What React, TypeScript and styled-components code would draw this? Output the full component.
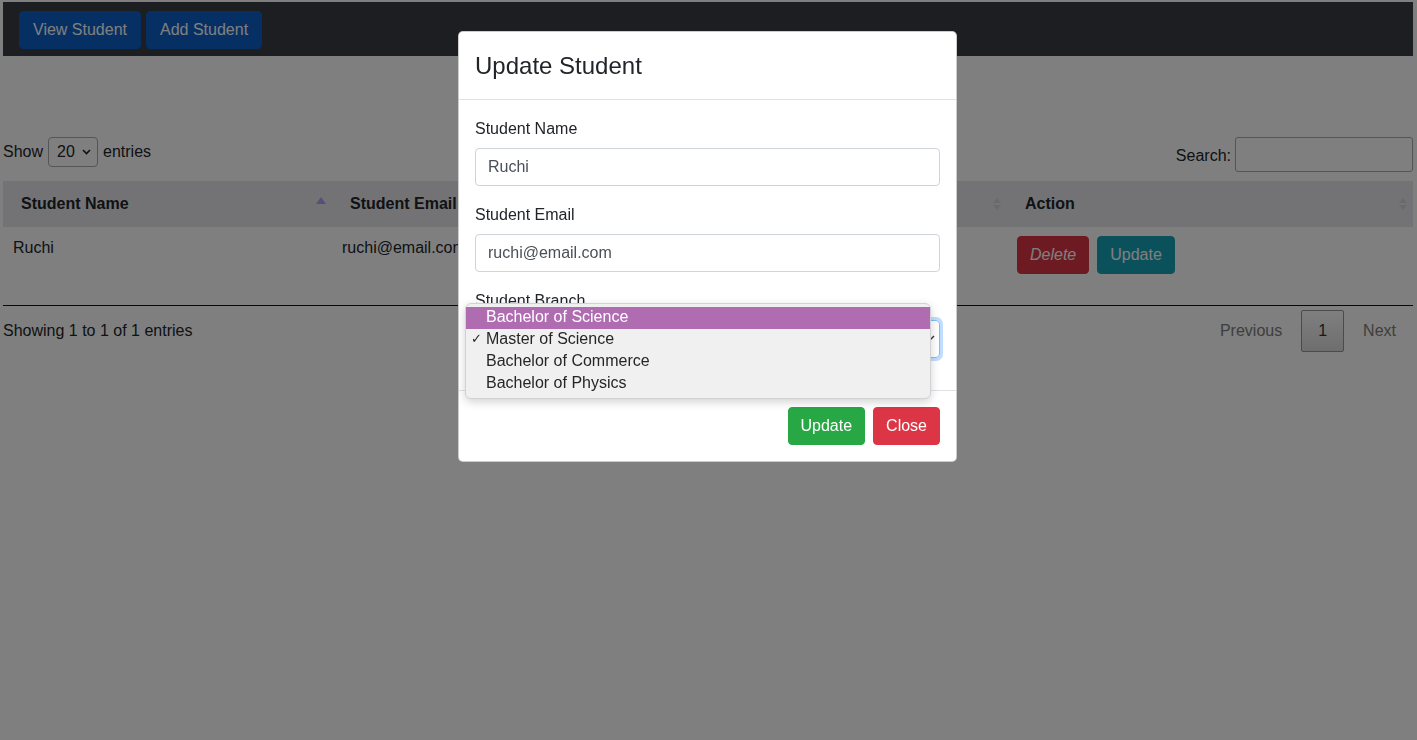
import React from "react";
import styled, { createGlobalStyle, css } from "styled-components";

const Global = createGlobalStyle`
  html, body { margin: 0; padding: 0; background: #fff; }
  body {
    font-family: "Liberation Sans", Arial, sans-serif;
    font-size: 16px;
    line-height: 1.5;
    color: #212529;
    overflow: hidden;
  }
  * { box-sizing: border-box; }
`;

const Page = styled.div`
  padding: 2px 4px 0 3px;
  height: 740px;
`;

const Navbar = styled.nav`
  display: flex;
  align-items: center;
  gap: 5px;
  height: 54px;
  padding: 9px 16px 7px;
  background: #383c42;
`;

const NavButton = styled.button`
  height: 38px;
  padding: 0 13px;
  border: 1px solid #0c5ec9;
  border-radius: 4px;
  background: #0c5ec9;
  color: #fff;
  font: inherit;
  font-size: 16px;
`;

const TableTop = styled.div`
  display: flex;
  justify-content: space-between;
  align-items: flex-start;
  margin-top: 81px;
`;

const LengthControl = styled.label`
  display: flex;
  align-items: center;
  gap: 4px;
  height: 30px;
`;

const SmallSelect = styled.div`
  display: flex;
  align-items: center;
  justify-content: space-between;
  width: 50px;
  height: 30px;
  padding: 0 6px 0 8px;
  border: 1px solid #aaa;
  border-radius: 4px;
  margin: 0 1px;
`;

const SearchControl = styled.label`
  display: flex;
  align-items: center;
  gap: 4px;
  height: 35px;
  padding-top: 2px;
`;

const SearchInput = styled.div`
  width: 178px;
  height: 35px;
  border: 1px solid #aaa;
  border-radius: 3px;
  margin-top: -2px;
`;

const Table = styled.table`
  width: 100%;
  border-collapse: collapse;
  margin-top: 9px;
  border-bottom: 1px solid #111;
  table-layout: fixed;
`;

const Th = styled.th<{ $w?: number }>`
  position: relative;
  text-align: left;
  font-weight: bold;
  padding: 11px 18px;
  height: 46px;
  background: #e6e7ea;
  ${(p) => p.$w && css`width: ${p.$w}px;`}
`;

const SortIcon = styled.span<{ $active?: boolean }>`
  position: absolute;
  right: 6px;
  top: 50%;
  width: 8px;
  height: 14px;
  transform: translateY(-50%);
  display: flex;
  flex-direction: column;
  align-items: center;
  justify-content: center;
  gap: 2px;
  &::before, &::after {
    content: "";
    width: 0;
    height: 0;
    border-left: 4px solid transparent;
    border-right: 4px solid transparent;
  }
  &::before { border-bottom: 5px solid #d3d4d8; }
  &::after { border-top: 5px solid #d3d4d8; }
  ${(p) =>
    p.$active &&
    css`
      top: 16px;
      right: 6px;
      width: 10px;
      height: 7px;
      transform: none;
      &::before {
        border-left-width: 5px;
        border-right-width: 5px;
        border-bottom: 7px solid #a4a4f0;
      }
      &::after { display: none; }
    `}
`;

const Td = styled.td`
  padding: 9px 10px 31px;
  vertical-align: top;
  white-space: nowrap;
  overflow: hidden;
`;

const Btn = styled.button<{ $variant: "danger" | "info" | "success"; $italic?: boolean }>`
  height: 38px;
  padding: 0 12px;
  border-radius: 4px;
  font: inherit;
  font-size: 16px;
  color: #fff;
  ${(p) => p.$italic && css`font-style: italic;`}
  ${(p) =>
    p.$variant === "danger"
      ? css`background: #dc3545; border: 1px solid #dc3545;`
      : p.$variant === "info"
      ? css`background: #17a2b8; border: 1px solid #17a2b8;`
      : css`background: #28a745; border: 1px solid #28a745;`}
`;

const ActionGroup = styled.div`
  display: flex;
  gap: 8px;
`;

const TableBottom = styled.div`
  display: flex;
  justify-content: space-between;
  align-items: flex-start;
`;

const Info = styled.div`
  padding-top: 13px;
`;

const Pagination = styled.div`
  display: flex;
  padding-top: 4px;
`;

const PageButton = styled.span<{ $current?: boolean }>`
  margin-left: 2px;
  padding: 8px 16px;
  border: 1px solid transparent;
  border-radius: 2px;
  color: #7c7c7c;
  ${(p) =>
    p.$current &&
    css`
      color: #333;
      border-color: #979797;
      background: linear-gradient(to bottom, #fff 0%, #dcdcdc 100%);
    `}
`;

const Backdrop = styled.div`
  position: fixed;
  inset: 0;
  background: rgba(0, 0, 0, 0.5);
  z-index: 10;
`;

const Modal = styled.div`
  position: fixed;
  top: 31px;
  left: calc(50% - 250.5px);
  width: 499px;
  background: #fff;
  border: 1px solid rgba(0, 0, 0, 0.2);
  border-radius: 5px;
  z-index: 20;
`;

const ModalHeader = styled.div`
  padding: 16px 16px 15px;
  border-bottom: 1px solid #dee2e6;
`;

const ModalTitle = styled.h4`
  margin: 0;
  font-size: 24px;
  font-weight: 500;
  line-height: 36px;
`;

const ModalBody = styled.div`
  padding: 16px;
`;

const FormGroup = styled.div`
  position: relative;
  margin-bottom: 16px;
`;

const Label = styled.label`
  display: block;
  margin-bottom: 8px;
  padding-top: 1px;
  line-height: 23px;
`;

const Input = styled.div<{ $focus?: boolean }>`
  position: relative;
  height: 38px;
  padding: 6px 12px;
  border: 1px solid #ced4da;
  border-radius: 4px;
  color: #495057;
  ${(p) =>
    p.$focus &&
    css`
      border-color: #80bdff;
      box-shadow: 0 0 0 3px rgba(0, 123, 255, 0.25);
    `}
`;

const Chevron = styled.svg`
  position: absolute;
  right: 4px;
  top: 14px;
`;

const ModalFooter = styled.div`
  display: flex;
  justify-content: flex-end;
  gap: 8px;
  padding: 16px;
  border-top: 1px solid #dee2e6;
`;

const Dropdown = styled.ul`
  position: absolute;
  top: 15px;
  left: -10px;
  width: 466px;
  margin: 0;
  padding: 3px 0;
  list-style: none;
  background: #f0f0f1;
  border: 1px solid #d2d2d4;
  border-radius: 6px;
  box-shadow: 0 3px 10px rgba(0, 0, 0, 0.18);
  z-index: 5;
`;

const Option = styled.li<{ $hl?: boolean }>`
  position: relative;
  height: 22px;
  line-height: 20px;
  padding-left: 20px;
  color: #262626;
  ${(p) => p.$hl && css`background: #b06cb1; color: #fff;`}
`;

const Check = styled.span`
  position: absolute;
  left: 5px;
  top: 0;
  font-size: 13px;
  font-family: "DejaVu Sans", sans-serif;
`;

export default function App() {
  return (
    <>
      <Global />
      <Page>
        <Navbar>
          <NavButton>View Student</NavButton>
          <NavButton>Add Student</NavButton>
        </Navbar>
        <TableTop>
          <LengthControl>
            Show
            <SmallSelect>
              20
              <svg width="9" height="6" viewBox="0 0 9 6">
                <path d="M1 1l3.5 3.5L8 1" stroke="#222" strokeWidth="1.6" fill="none" />
              </svg>
            </SmallSelect>
            entries
          </LengthControl>
          <SearchControl>
            Search:
            <SearchInput />
          </SearchControl>
        </TableTop>
        <Table>
          <thead>
            <tr>
              <Th $w={329}>
                Student Name
                <SortIcon $active />
              </Th>
              <Th $w={338}>
                Student Email
                <SortIcon />
              </Th>
              <Th $w={337}>
                Student Branch
                <SortIcon />
              </Th>
              <Th>
                Action
                <SortIcon />
              </Th>
            </tr>
          </thead>
          <tbody>
            <tr>
              <Td>Ruchi</Td>
              <Td>ruchi@email.com</Td>
              <Td>Master of Science</Td>
              <Td>
                <ActionGroup>
                  <Btn $variant="danger" $italic>
                    Delete
                  </Btn>
                  <Btn $variant="info">Update</Btn>
                </ActionGroup>
              </Td>
            </tr>
          </tbody>
        </Table>
        <TableBottom>
          <Info>Showing 1 to 1 of 1 entries</Info>
          <Pagination>
            <PageButton>Previous</PageButton>
            <PageButton $current>1</PageButton>
            <PageButton>Next</PageButton>
          </Pagination>
        </TableBottom>
      </Page>
      <Backdrop />
      <Modal>
        <ModalHeader>
          <ModalTitle>Update Student</ModalTitle>
        </ModalHeader>
        <ModalBody>
          <FormGroup>
            <Label>Student Name</Label>
            <Input>Ruchi</Input>
          </FormGroup>
          <FormGroup>
            <Label>Student Email</Label>
            <Input>ruchi@email.com</Input>
          </FormGroup>
          <FormGroup>
            <Label>Student Branch</Label>
            <Input $focus>
              Master of Science
              <Chevron width="8" height="6" viewBox="0 0 8 6">
                <path d="M1 1l3 3 3-3" stroke="#333" strokeWidth="1.4" fill="none" />
              </Chevron>
            </Input>
            <Dropdown>
              <Option $hl>Bachelor of Science</Option>
              <Option>
                <Check>✓</Check>Master of Science
              </Option>
              <Option>Bachelor of Commerce</Option>
              <Option>Bachelor of Physics</Option>
            </Dropdown>
          </FormGroup>
        </ModalBody>
        <ModalFooter>
          <Btn $variant="success">Update</Btn>
          <Btn $variant="danger">Close</Btn>
        </ModalFooter>
      </Modal>
    </>
  );
}
